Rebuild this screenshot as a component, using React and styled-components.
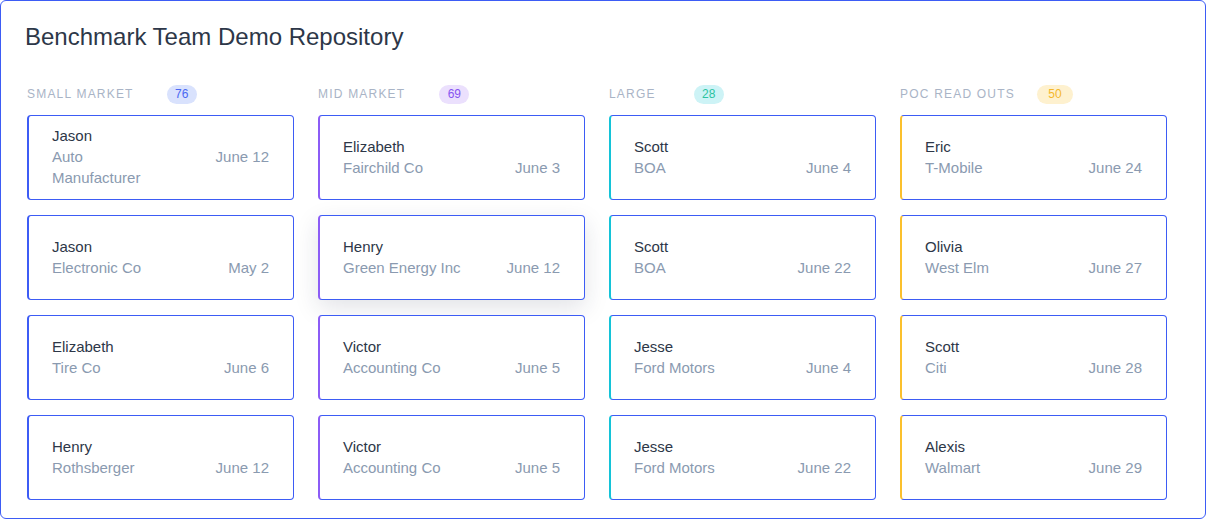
import React from 'react';
import styled, { createGlobalStyle } from "styled-components";

const GlobalStyle = createGlobalStyle`
body {
  margin: 0;
  background: #ffffff;
  font-family: "Liberation Sans", Arial, sans-serif;
}
`;

const Board = styled.div`
box-sizing: border-box;
width: 1206px;
height: 519px;
border: 1px solid #3d5cf5;
border-radius: 6px;
padding: 21px 26px 0 26px;
background: #fff;
`;

const Title = styled.h1`
margin: 0 0 0 -2px;
font-size: 24px;
font-weight: 400;
line-height: 30px;
color: #2d3748;
`;

const Columns = styled.div`
display: grid;
grid-template-columns: repeat(4, 267px);
column-gap: 24px;
margin-top: 32px;
`;

const Column = styled.section`
display: flex;
flex-direction: column;
`;

const ColumnHeader = styled.div`
display: flex;
align-items: center;
height: 20px;
margin-bottom: 11px;
`;

const Label = styled.span`
font-size: 12px;
letter-spacing: 1.2px;
text-transform: uppercase;
color: #a9b4c6;
`;

const Badge = styled.span`
display: inline-flex;
align-items: center;
justify-content: center;
margin-left: ${p => p.offset}px;
min-width: ${p => p.wide ? 36 : 30}px;
height: 19px;
border-radius: 10px;
font-size: 12px;
background: ${p => p.bg};
color: ${p => p.fg};
`;

const CardList = styled.ul`
list-style: none;
margin: 0;
padding: 0;
display: flex;
flex-direction: column;
gap: 15px;
`;

const Card = styled.li`
box-sizing: border-box;
height: 85px;
display: flex;
flex-direction: column;
justify-content: center;
padding: 0 24px 1px 23px;
background: #fff;
border: 1px solid #3d5cf5;
border-left: 2px solid ${p => p.accent};
border-radius: 4px;
box-shadow: ${p => p.raised ? "0 8px 24px rgba(30, 40, 70, 0.13)" : "none"};
`;

const Name = styled.div`
font-size: 15px;
line-height: 20px;
color: #2d3748;
`;

const DetailRow = styled.div`
display: flex;
justify-content: space-between;
align-items: flex-start;
`;

const Company = styled.div`
max-width: 120px;
font-size: 15px;
line-height: 21px;
color: #8a9ab0;
`;

const DateText = styled.div`
font-size: 15px;
line-height: 21px;
color: #8a9ab0;
white-space: nowrap;
`;

const columns = [
  {
    title: "Small Market", count: 76, offset: 33, accent: "#3d5cf5", bg: "#d9e2fd", fg: "#4a68f2",
    cards: [
      { name: "Jason", company: "Auto Manufacturer", date: "June 12" },
      { name: "Jason", company: "Electronic Co", date: "May 2" },
      { name: "Elizabeth", company: "Tire Co", date: "June 6" },
      { name: "Henry", company: "Rothsberger", date: "June 12" },
    ],
  },
  {
    title: "Mid Market", count: 69, offset: 34, accent: "#8c5cf6", bg: "#ebe0fd", fg: "#8754f0",
    cards: [
      { name: "Elizabeth", company: "Fairchild Co", date: "June 3" },
      { name: "Henry", company: "Green Energy Inc", date: "June 12", raised: true },
      { name: "Victor", company: "Accounting Co", date: "June 5" },
      { name: "Victor", company: "Accounting Co", date: "June 5" },
    ],
  },
  {
    title: "Large", count: 28, offset: 38, accent: "#14c3d8", bg: "#cdf3f6", fg: "#2cc3a1",
    cards: [
      { name: "Scott", company: "BOA", date: "June 4" },
      { name: "Scott", company: "BOA", date: "June 22" },
      { name: "Jesse", company: "Ford Motors", date: "June 4" },
      { name: "Jesse", company: "Ford Motors", date: "June 22" },
    ],
  },
  {
    title: "POC Read Outs", count: 50, offset: 22, wide: true, accent: "#fbc02d", bg: "#fef1cf", fg: "#f4b72c",
    cards: [
      { name: "Eric", company: "T-Mobile", date: "June 24" },
      { name: "Olivia", company: "West Elm", date: "June 27" },
      { name: "Scott", company: "Citi", date: "June 28" },
      { name: "Alexis", company: "Walmart", date: "June 29" },
    ],
  },
];

const App = () => {
  return (
    <>
      <GlobalStyle />
      <Board>
        <Title>Benchmark Team Demo Repository</Title>
        <Columns>
          {columns.map(col => (
            <Column key={col.title}>
              <ColumnHeader>
                <Label>{col.title}</Label>
                <Badge offset={col.offset} wide={col.wide} bg={col.bg} fg={col.fg}>{col.count}</Badge>
              </ColumnHeader>
              <CardList>
                {col.cards.map((card, i) => (
                  <Card key={i} accent={col.accent} raised={card.raised}>
                    <Name>{card.name}</Name>
                    <DetailRow>
                      <Company>{card.company}</Company>
                      <DateText>{card.date}</DateText>
                    </DetailRow>
                  </Card>
                ))}
              </CardList>
            </Column>
          ))}
        </Columns>
      </Board>
    </>
  );
};

export default App;
